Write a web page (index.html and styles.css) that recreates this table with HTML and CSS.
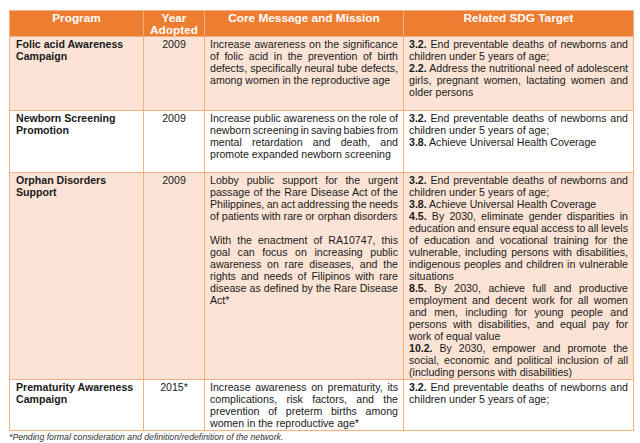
FILE: index.html
```html
<!DOCTYPE html>
<html>
<head>
<meta charset="utf-8">
<link rel="stylesheet" href="styles.css">
</head>
<body>
<table class="sdg">
  <colgroup>
    <col class="c1"><col class="c2"><col class="c3"><col class="c4">
  </colgroup>
  <thead>
    <tr>
      <th>Program</th>
      <th>Year Adopted</th>
      <th>Core Message and Mission</th>
      <th>Related SDG Target</th>
    </tr>
  </thead>
  <tbody>
    <tr class="tint spaced">
      <td class="prog">Folic acid Awareness Campaign</td>
      <td class="year">2009</td>
      <td>
        <span class="ln">Increase awareness on the significance</span>
        <span class="ln">of folic acid in the prevention of birth</span>
        <span class="ln">defects, specifically neural tube defects,</span>
        <span class="ln e">among women in the reproductive age</span>
      </td>
      <td>
        <span class="ln"><b>3.2.</b> End preventable deaths of newborns and</span>
        <span class="ln e">children under 5 years of age;</span>
        <span class="ln"><b>2.2.</b> Address the nutritional need of adolescent</span>
        <span class="ln">girls, pregnant women, lactating women and</span>
        <span class="ln e">older persons</span>
      </td>
    </tr>
    <tr class="plain spaced">
      <td class="prog">Newborn Screening Promotion</td>
      <td class="year">2009</td>
      <td>
        <span class="ln">Increase public awareness on the role of</span>
        <span class="ln">newborn screening in saving babies from</span>
        <span class="ln">mental retardation and death, and</span>
        <span class="ln e">promote expanded newborn screening</span>
      </td>
      <td>
        <span class="ln"><b>3.2.</b> End preventable deaths of newborns and</span>
        <span class="ln e">children under 5 years of age;</span>
        <span class="ln e"><b>3.8.</b> Achieve Universal Health Coverage</span>
      </td>
    </tr>
    <tr class="tint">
      <td class="prog">Orphan Disorders Support</td>
      <td class="year">2009</td>
      <td>
        <span class="ln">Lobby public support for the urgent</span>
        <span class="ln">passage of the Rare Disease Act of the</span>
        <span class="ln">Philippines, an act addressing the needs</span>
        <span class="ln e">of patients with rare or orphan disorders</span>
        <span class="gap"></span>
        <span class="ln">With the enactment of RA10747, this</span>
        <span class="ln">goal can focus on increasing public</span>
        <span class="ln">awareness on rare diseases, and the</span>
        <span class="ln">rights and needs of Filipinos with rare</span>
        <span class="ln">disease as defined by the Rare Disease</span>
        <span class="ln e">Act*</span>
      </td>
      <td>
        <span class="ln"><b>3.2.</b> End preventable deaths of newborns and</span>
        <span class="ln e">children under 5 years of age;</span>
        <span class="ln e"><b>3.8.</b> Achieve Universal Health Coverage</span>
        <span class="ln"><b>4.5.</b> By 2030, eliminate gender disparities in</span>
        <span class="ln">education and ensure equal access to all levels</span>
        <span class="ln">of education and vocational training for the</span>
        <span class="ln">vulnerable, including persons with disabilities,</span>
        <span class="ln">indigenous peoples and children in vulnerable</span>
        <span class="ln e">situations</span>
        <span class="ln"><b>8.5.</b> By 2030, achieve full and productive</span>
        <span class="ln">employment and decent work for all women</span>
        <span class="ln">and men, including for young people and</span>
        <span class="ln">persons with disabilities, and equal pay for</span>
        <span class="ln e">work of equal value</span>
        <span class="ln"><b>10.2.</b> By 2030, empower and promote the</span>
        <span class="ln">social, economic and political inclusion of all</span>
        <span class="ln e">(including persons with disabilities)</span>
      </td>
    </tr>
    <tr class="plain">
      <td class="prog">Prematurity Awareness Campaign</td>
      <td class="year">2015*</td>
      <td>
        <span class="ln">Increase awareness on prematurity, its</span>
        <span class="ln">complications, risk factors, and the</span>
        <span class="ln">prevention of preterm births among</span>
        <span class="ln e">women in the reproductive age*</span>
      </td>
      <td>
        <span class="ln"><b>3.2.</b> End preventable deaths of newborns and</span>
        <span class="ln e">children under 5 years of age;</span>
      </td>
    </tr>
  </tbody>
</table>
<p class="note">*Pending formal consideration and definition/redefinition of the network.</p>
</body>
</html>
```

FILE: styles.css
```css
html, body {
  margin: 0;
  padding: 0;
  background: #ffffff;
}
body {
  font-family: "Liberation Sans", Arial, sans-serif;
  color: #1a1a1a;
}
.sdg {
  margin: 10px 0 0 9px;
  border-collapse: collapse;
  table-layout: fixed;
  width: 624px;
  font-size: 10.6px;
  line-height: 12px;
}
.c1 { width: 134px; }
.c2 { width: 61px; }
.c3 { width: 199px; }
.c4 { width: 230px; }
.sdg th {
  background: #ed7d31;
  color: #ffffff;
  font-weight: bold;
  font-size: 11.8px;
  line-height: 12px;
  padding: 1px 4px 0 4px;
  text-align: center;
  vertical-align: top;
  border: 1px solid #f4b083;
}
.sdg td {
  border: 1px solid #f4b083;
  vertical-align: top;
  padding: 1px 5px 1px 5px;
}
.spaced td { padding-bottom: 12px; }
.tint td { background: #fbe4d5; }
.plain td { background: #ffffff; }
.prog {
  font-weight: bold;
  padding-left: 6px !important;
}
.year { text-align: center; }
.ln {
  display: block;
  word-spacing: -1.5px;
  text-align: justify;
  text-align-last: justify;
}
.ln.e { text-align-last: left; word-spacing: 0; }
.gap { display: block; height: 12px; }
.note {
  margin: 1px 0 0 9px;
  font-size: 8.7px;
  line-height: 10px;
  font-style: italic;
  color: #333333;
}
```
